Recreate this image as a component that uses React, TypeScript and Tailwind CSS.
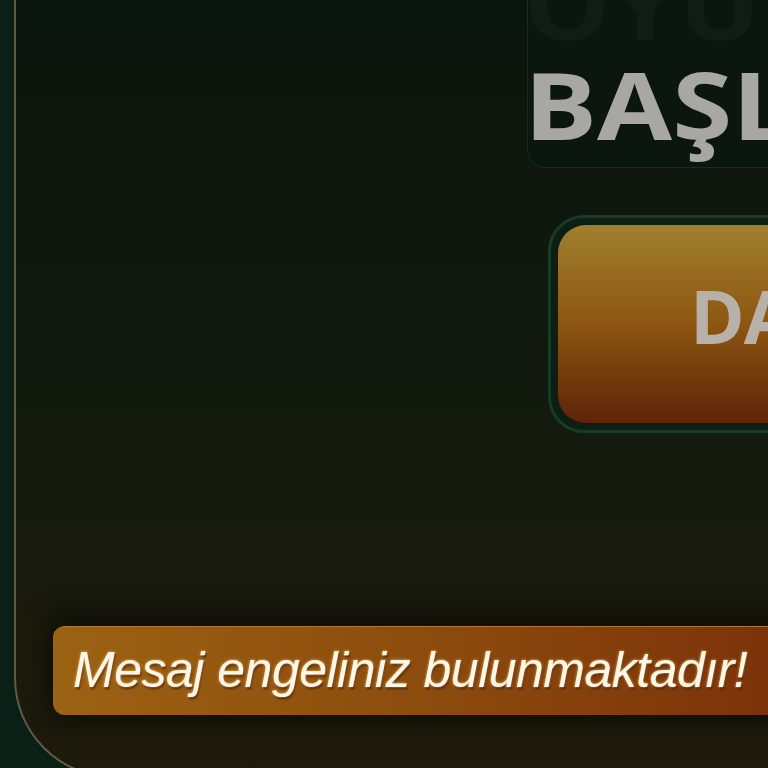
import React from "react";

export default function App() {
  return (
    <div className="w-[768px] h-[768px] overflow-hidden bg-[#0a2017] flex">
      <div className="ml-[14px] w-[820px] h-[778px] shrink-0 border-l-2 border-b-2 border-[#5e5d44] rounded-bl-[100px] bg-gradient-to-b from-[#0a150d] via-[#121a0e] to-[#1e1a0c] flex flex-col">
        {/* Title box */}
        <div className="ml-[511px] mt-[-46px] w-[320px] h-[214px] rounded-bl-[18px] border-l border-b border-[#1a2a1f] bg-[#0b170e] flex flex-col font-['Open_Sans','Noto_Sans',sans-serif] font-bold">
          <div className="text-[93px] leading-[100px] tracking-[0px] text-[#0f1d14] whitespace-nowrap origin-left scale-x-[1.17] ml-[-4px]">OYUNA</div>
          <div className="text-[93px] leading-[100px] tracking-[0px] text-[#a8a7a3] whitespace-nowrap origin-left scale-x-[1.17] ml-[-4px]">BAŞLA</div>
        </div>
        {/* Button */}
        <div className="ml-[532px] mt-[47px] w-[320px] h-[218px] rounded-[36px] border-[3px] border-[#173b28] bg-[#0d1f15] p-[7px] shrink-0">
          <div className="w-full h-full rounded-[28px] bg-gradient-to-b from-[#a0802f] via-[#8c5611] to-[#5f2308] flex items-center pl-[132px] pb-[16px] font-['Open_Sans','Noto_Sans',sans-serif] font-bold">
            <span className="text-[74px] leading-none tracking-[-1px] text-[#b8b1aa] whitespace-nowrap">DAVET</span>
          </div>
        </div>
        {/* Message bar */}
        <div className="ml-[37px] mt-[193px] w-[760px] h-[89px] shrink-0 rounded-l-[12px] border-t border-[#b07a32] bg-gradient-to-r from-[#9c6212] via-[#8c4b0d] to-[#7a2f09] shadow-[0_-12px_28px_rgba(0,0,0,0.45),0_8px_20px_rgba(0,0,0,0.35)] flex items-center pl-[20px] pb-[2px]">
          <span className="font-['Liberation_Sans','Arial',sans-serif] italic text-[50px] leading-none tracking-[-0.5px] text-[#fff7e8] whitespace-nowrap [text-shadow:0_0_3px_#ffb45a,1px_2px_2px_#3a1600]">
            Mesaj engeliniz bulunmaktadır!
          </span>
        </div>
      </div>
    </div>
  );
}
